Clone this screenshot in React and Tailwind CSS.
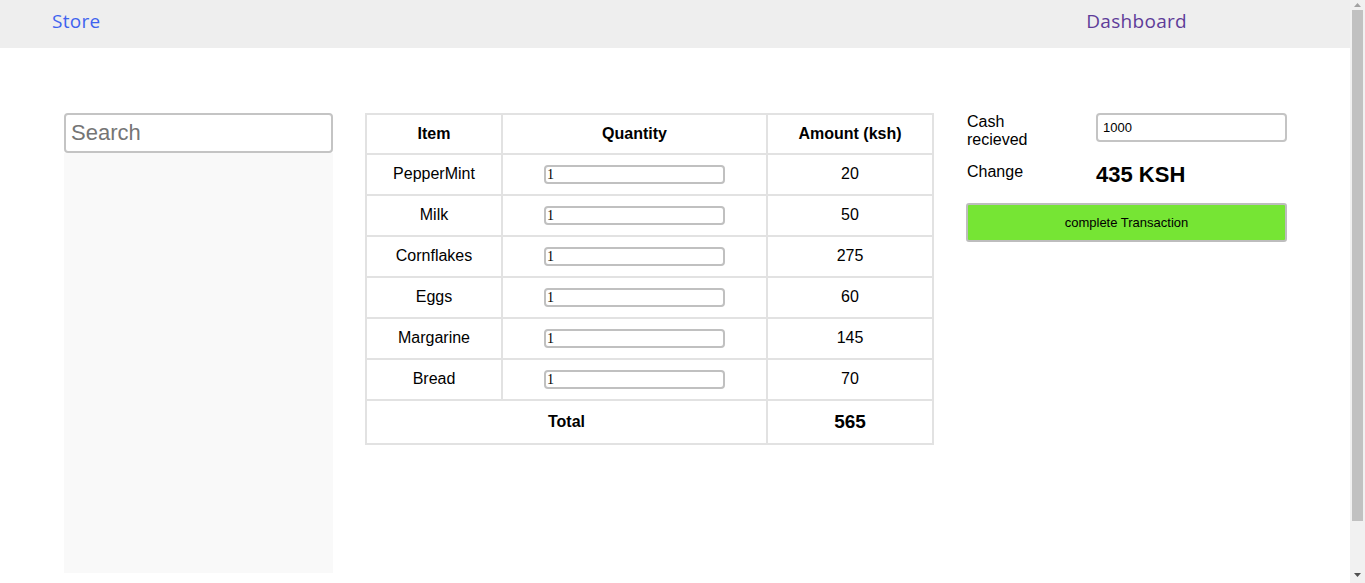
import React from "react";

const items = [
  { name: "PepperMint", qty: 1, amount: 20 },
  { name: "Milk", qty: 1, amount: 50 },
  { name: "Cornflakes", qty: 1, amount: 275 },
  { name: "Eggs", qty: 1, amount: 60 },
  { name: "Margarine", qty: 1, amount: 145 },
  { name: "Bread", qty: 1, amount: 70 },
];

const Scrollbar = () => (
  <div className="w-[15px] h-[583px] shrink-0 bg-[#f1f1f1] flex flex-col items-center">
    <svg width="15" height="10" viewBox="0 0 15 10" className="shrink-0">
      <path d="M4 7 L7.5 3 L11 7 Z" fill="#a3a3a3" />
    </svg>
    <div className="w-[11px] h-[511px] bg-[#c1c1c1] shrink-0"></div>
    <div className="flex-1"></div>
    <svg width="15" height="14" viewBox="0 0 15 14" className="shrink-0">
      <path d="M4 4 L11 4 L7.5 8 Z" fill="#505050" />
    </svg>
  </div>
);

const App = () => {
  return (
    <div className="h-[583px] overflow-hidden flex bg-white font-['Liberation_Sans',Arial,sans-serif] text-black">
      <div className="flex-1 min-w-0">
        {/* Nav */}
        <nav className="h-[48px] bg-[#eeeeee] flex items-start justify-between pt-[8px] pl-[52px] pr-[163px] font-['Open_Sans',sans-serif] text-[19px] leading-[26px] font-medium tracking-[0.3px]">
          <a className="text-[#3f63ee]" href="#">Store</a>
          <a className="text-[#5e3c99]" href="#">Dashboard</a>
        </nav>

        <main className="flex items-start pl-[64px] pt-[65px] gap-[32px]">
          {/* Search column */}
          <div className="w-[269px] flex flex-col">
            <input
              type="text"
              placeholder="Search"
              className="h-[40px] w-full border-2 border-[#c4c4c4] rounded-[4px] px-[5px] text-[22px] placeholder:text-[#757575] outline-none bg-white"
            />
            <div className="h-[420px] bg-[#f9f9f9]"></div>
          </div>

          {/* Table */}
          <table className="w-[569px] border-collapse border-2 border-[#e2e2e2] text-[16px]">
            <thead>
              <tr className="h-[40px]">
                <th className="w-[136px] border-2 border-[#e2e2e2] font-bold">Item</th>
                <th className="w-[265px] border-2 border-[#e2e2e2] font-bold">Quantity</th>
                <th className="border-2 border-[#e2e2e2] font-bold">Amount (ksh)</th>
              </tr>
            </thead>
            <tbody>
              {items.map((it) => (
                <tr key={it.name} className="h-[41px]">
                  <td className="border-2 border-[#e2e2e2] text-center pb-[2px]">{it.name}</td>
                  <td className="border-2 border-[#e2e2e2] p-0">
                    <div className="flex justify-center items-center">
                      <input
                        type="text"
                        defaultValue={it.qty}
                        className="w-[181px] h-[19px] border-2 border-[#c0c0c0] rounded-[4px] px-[1px] text-[14px] leading-[15px] font-['Liberation_Serif',serif] outline-none"
                      />
                    </div>
                  </td>
                  <td className="border-2 border-[#e2e2e2] text-center pb-[2px]">{it.amount}</td>
                </tr>
              ))}
              <tr className="h-[44px]">
                <td colSpan={2} className="border-2 border-[#e2e2e2] text-center font-bold">Total</td>
                <td className="border-2 border-[#e2e2e2] text-center font-bold text-[19px]">565</td>
              </tr>
            </tbody>
          </table>

          {/* Payment */}
          <div className="w-[321px] flex flex-col">
            <div className="flex items-start">
              <label className="w-[80px] text-[16px] leading-[18px] pl-[1px]">Cash recieved</label>
              <input
                type="text"
                defaultValue="1000"
                className="ml-[50px] h-[29px] w-[191px] border-2 border-[#c4c4c4] rounded-[4px] px-[5px] text-[13px] outline-none"
              />
            </div>
            <div className="flex items-start mt-[14px]">
              <span className="w-[130px] text-[16px] leading-[18px] pl-[1px]">Change</span>
              <span className="text-[22px] font-bold leading-[26px] mt-[-1px]">435 KSH</span>
            </div>
            <button className="mt-[15px] h-[39px] w-full bg-[#76e534] border-2 border-[#bdbdbd] rounded-[3px] text-[13px]">
              complete Transaction
            </button>
          </div>
        </main>
      </div>
      <Scrollbar />
    </div>
  );
};

export default App;
